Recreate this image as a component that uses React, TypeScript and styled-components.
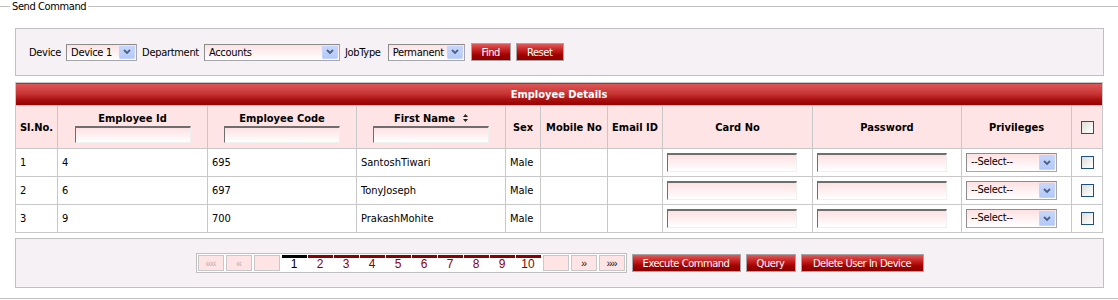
import React from "react";
import styled, { createGlobalStyle } from "styled-components";

const GlobalStyle = createGlobalStyle`
  html, body { margin: 0; padding: 0; background: #fff; }
  body {
    font-family: "DejaVu Sans Condensed", "DejaVu Sans", sans-serif;
    font-stretch: condensed;
    font-size: 11px;
    color: #000;
  }
`;

const Fieldset = styled.fieldset`
  margin: 0;
  padding: 15px 14px 10px 15px;
  border: 0;
  border-top: 1px solid #c0c0c0;
  border-bottom: 1px solid #c0c0c0;
  min-width: 0;
`;

const Legend = styled.legend`
  margin-left: -5px;
  padding: 0 2px;
  font-size: 11px;
  line-height: 13px;
  letter-spacing: -0.4px;
`;

const Panel = styled.div<{ $center?: boolean }>`
  border: 1px solid #c0c0c0;
  background: #f6f1f5;
  padding: 14px 13px;
  display: flex;
  align-items: center;
  gap: 5px;
  justify-content: ${(p) => (p.$center ? "center" : "flex-start")};
`;

const Label = styled.span`
  font-size: 11px;
  line-height: 17px;
  letter-spacing: -0.3px;
`;

const SelectBox = styled.div<{ $w: number; $h?: number }>`
  box-sizing: border-box;
  width: ${(p) => p.$w}px;
  height: ${(p) => p.$h ?? 17}px;
  border: 1px solid #a7a6aa;
  border-top-color: #8c8c8c;
  border-left-color: #8c8c8c;
  background: linear-gradient(#fde1e3, #ffffff);
  display: flex;
  align-items: stretch;
  padding: 1px;
`;

const SelectText = styled.span`
  flex: 1;
  padding-left: 3px;
  font-size: 11px;
  line-height: 14px;
  letter-spacing: -0.3px;
  white-space: nowrap;
  overflow: hidden;
`;

const SelectArrow = styled.span`
  width: 16px;
  box-sizing: border-box;
  border: 1px solid #c3d3fd;
  border-radius: 1px;
  background: linear-gradient(#c6d6fb, #b3c9f7);
  display: flex;
  align-items: center;
  justify-content: center;
`;

const RedButton = styled.button<{ $w: number }>`
  box-sizing: border-box;
  width: ${(p) => p.$w}px;
  height: 18px;
  padding: 0;
  border: 1px solid #a5a5a5;
  background: linear-gradient(#e25a5a 0%, #c41e1e 40%, #a00000 70%, #8c0000 100%);
  color: #fff;
  font-family: "DejaVu Sans Condensed", "DejaVu Sans", sans-serif;
  font-stretch: condensed;
  font-size: 11px;
  line-height: 15px;
  letter-spacing: -0.45px;
  cursor: pointer;
`;

const Grid = styled.table`
  width: 1088px;
  margin-top: 6px;
  border-collapse: collapse;
  table-layout: fixed;
`;

const TitleCell = styled.th`
  height: 22px;
  padding: 0;
  border: 1px solid #c8c8c8;
  background: linear-gradient(#df5757 0%, #c93636 45%, #a80f0f 75%, #960000 100%);
  color: #fff;
  font-weight: bold;
  font-size: 11px;
  text-align: center;
`;

const HeadCell = styled.th`
  height: 42px;
  padding: 0;
  border: 1px solid #c8c8c8;
  background: #fee4e4;
  font-weight: bold;
  font-size: 11px;
  text-align: center;
  vertical-align: middle;
`;

const HeadStack = styled.div`
  display: flex;
  flex-direction: column;
  align-items: center;
  gap: 1px;
`;

const HeadTitle = styled.span`
  display: inline-flex;
  align-items: center;
  gap: 8px;
  line-height: 13px;
`;

const TextBox = styled.input<{ $w: number; $h: number }>`
  box-sizing: border-box;
  width: ${(p) => p.$w}px;
  height: ${(p) => p.$h}px;
  margin: 0;
  padding: 0 2px;
  border: 1px solid #f0f0f0;
  border-top: 2px solid #6e6e6e;
  border-left: 1px solid #6e6e6e;
  background: linear-gradient(#fde1e3, #ffffff);
  font-size: 11px;
  outline: none;
`;

const BodyCell = styled.td<{ $center?: boolean }>`
  height: 27px;
  padding: 0 4px;
  border: 1px solid #c8c8c8;
  background: #fff;
  font-size: 11px;
  text-align: ${(p) => (p.$center ? "center" : "left")};
  vertical-align: middle;
  white-space: nowrap;
  overflow: hidden;
`;

const Check = styled.input`
  appearance: none;
  -webkit-appearance: none;
  box-sizing: border-box;
  width: 13px;
  height: 13px;
  margin: 0;
  border: 1px solid #1c5180;
  background: linear-gradient(135deg, #dcdcd7 0%, #f3f3f1 60%, #ffffff 100%);
  vertical-align: middle;
`;

const Pager = styled.div`
  display: flex;
  gap: 2px;
  padding: 1px;
  border: 1px solid #c0c0c0;
  background: #fff;
`;

const PagerCell = styled.span<{ $disabled?: boolean }>`
  box-sizing: border-box;
  width: 26px;
  height: 16px;
  border: 1px solid #c8c8c8;
  background: #fee4e4;
  color: ${(p) => (p.$disabled ? "#c9aaaa" : "#222")};
  font-family: "Liberation Sans", sans-serif;
  font-size: 11px;
  line-height: 14px;
  letter-spacing: -1px;
  text-align: center;
`;

const PageList = styled.div`
  display: flex;
  gap: 1px;
`;

const PageLink = styled.span<{ $active?: boolean }>`
  box-sizing: border-box;
  width: 25px;
  height: 16px;
  border-top: 3px solid ${(p) => (p.$active ? "#000" : "#8b0000")};
  color: ${(p) => (p.$active ? "#000" : "#8b0000")};
  font-family: "Liberation Sans", sans-serif;
  font-size: 12px;
  line-height: 13px;
  text-align: center;
`;

const Actions = styled.div`
  display: flex;
  gap: 5px;
`;

const Chevron = () => (
  <svg width="8" height="6" viewBox="0 0 8 6">
    <polyline points="1,1 4,4 7,1" fill="none" stroke="#4d6185" strokeWidth="1.8" />
  </svg>
);

const SortIcon = () => (
  <svg width="5" height="8" viewBox="0 0 5 8">
    <polygon points="2.5,0 5,3 0,3" fill="#222" />
    <polygon points="0,5 5,5 2.5,8" fill="#222" />
  </svg>
);

const Select = ({ w, h, text }: { w: number; h?: number; text: string }) => (
  <SelectBox $w={w} $h={h}>
    <SelectText>{text}</SelectText>
    <SelectArrow>
      <Chevron />
    </SelectArrow>
  </SelectBox>
);

const rows = [
  { sl: 1, id: 4, code: 695, name: "SantoshTiwari", sex: "Male" },
  { sl: 2, id: 6, code: 697, name: "TonyJoseph", sex: "Male" },
  { sl: 3, id: 9, code: 700, name: "PrakashMohite", sex: "Male" },
];

const widths = [42, 150, 149, 149, 35, 67, 55, 150, 149, 110, 31];

export default function App() {
  return (
    <>
      <GlobalStyle />
      <Fieldset>
        <Legend>Send Command</Legend>
        <Panel>
          <Label>Device</Label>
          <Select w={71} text="Device 1" />
          <Label>Department</Label>
          <Select w={136} text="Accounts" />
          <Label style={{ marginRight: 2 }}>JobType</Label>
          <Select w={77} text="Permanent" />
          <RedButton $w={40} style={{ marginLeft: 1 }}>Find</RedButton>
          <RedButton $w={48}>Reset</RedButton>
        </Panel>

        <Grid>
          <colgroup>
            {widths.map((w, i) => (
              <col key={i} style={{ width: w }} />
            ))}
          </colgroup>
          <thead>
            <tr>
              <TitleCell colSpan={11}>Employee Details</TitleCell>
            </tr>
            <tr>
              <HeadCell>Sl.No.</HeadCell>
              <HeadCell>
                <HeadStack>
                  <HeadTitle>Employee Id</HeadTitle>
                  <TextBox $w={116} $h={17} />
                </HeadStack>
              </HeadCell>
              <HeadCell>
                <HeadStack>
                  <HeadTitle>Employee Code</HeadTitle>
                  <TextBox $w={116} $h={17} />
                </HeadStack>
              </HeadCell>
              <HeadCell>
                <HeadStack>
                  <HeadTitle>
                    First Name <SortIcon />
                  </HeadTitle>
                  <TextBox $w={116} $h={17} />
                </HeadStack>
              </HeadCell>
              <HeadCell>Sex</HeadCell>
              <HeadCell>Mobile No</HeadCell>
              <HeadCell>Email ID</HeadCell>
              <HeadCell>Card No</HeadCell>
              <HeadCell>Password</HeadCell>
              <HeadCell>Privileges</HeadCell>
              <HeadCell>
                <Check type="checkbox" />
              </HeadCell>
            </tr>
          </thead>
          <tbody>
            {rows.map((r) => (
              <tr key={r.sl}>
                <BodyCell>{r.sl}</BodyCell>
                <BodyCell>{r.id}</BodyCell>
                <BodyCell>{r.code}</BodyCell>
                <BodyCell>{r.name}</BodyCell>
                <BodyCell>{r.sex}</BodyCell>
                <BodyCell />
                <BodyCell />
                <BodyCell>
                  <TextBox $w={130} $h={19} />
                </BodyCell>
                <BodyCell>
                  <TextBox $w={130} $h={19} />
                </BodyCell>
                <BodyCell>
                  <Select w={91} h={19} text="--Select--" />
                </BodyCell>
                <BodyCell $center>
                  <Check type="checkbox" />
                </BodyCell>
              </tr>
            ))}
          </tbody>
        </Grid>

        <Panel $center style={{ marginTop: 5 }}>
          <Pager>
            <PagerCell $disabled>««</PagerCell>
            <PagerCell $disabled>«</PagerCell>
            <PagerCell $disabled />
            <PageList>
              {[1, 2, 3, 4, 5, 6, 7, 8, 9, 10].map((n) => (
                <PageLink key={n} $active={n === 1}>
                  {n}
                </PageLink>
              ))}
            </PageList>
            <PagerCell $disabled />
            <PagerCell>»</PagerCell>
            <PagerCell>»»</PagerCell>
          </Pager>
          <Actions>
            <RedButton $w={109}>Execute Command</RedButton>
            <RedButton $w={50}>Query</RedButton>
            <RedButton $w={123}>Delete User In Device</RedButton>
          </Actions>
        </Panel>
      </Fieldset>
    </>
  );
}
